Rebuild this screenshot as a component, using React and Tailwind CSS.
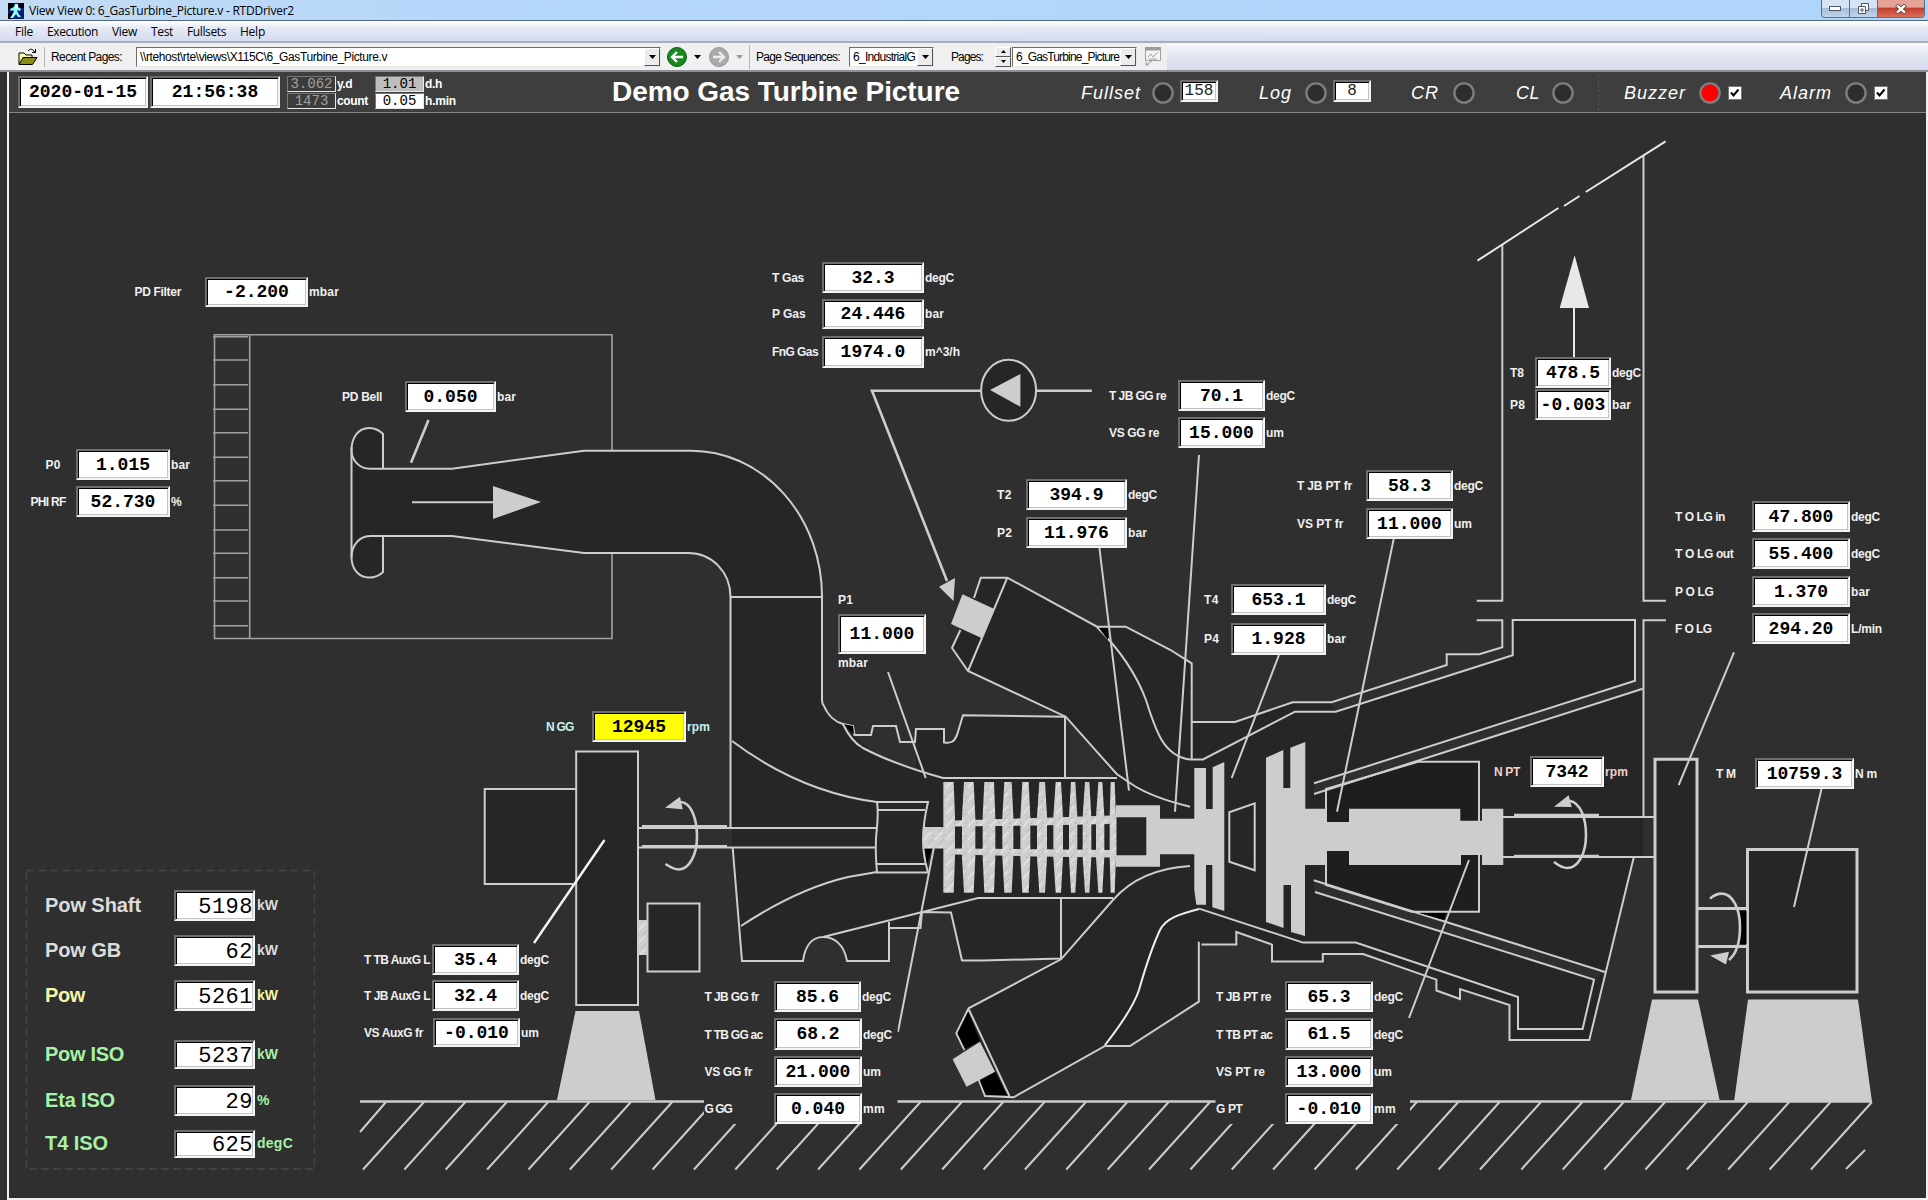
import { useLayoutEffect, useRef } from "react";

/* Text that is tracked in or out so that it fills a given width. */
function Fit({ w, className = "", children }) {
  const ref = useRef(null);
  useLayoutEffect(() => {
    const el = ref.current;
    el.style.letterSpacing = "0px";
    const natural = el.getBoundingClientRect().width;
    const n = Math.max(1, el.textContent.length);
    el.style.letterSpacing = (w - natural) / n + "px";
  }, [w, children]);
  return (
    <span ref={ref} className={"inline-block shrink-0 whitespace-pre " + className}>
      {children}
    </span>
  );
}

const BOX =
  "border-t-2 border-l-2 border-b-2 border-r-2 border-t-[#6e6e6e] border-l-[#6e6e6e] border-b-[#f4f4f4] border-r-[#f4f4f4] shadow-[inset_1px_1px_0_#000,inset_-1px_-1px_0_#c4c4c4]";

/* label x, label width, label, centre y, box x, y, w, h, value, unit, unit width */
const READINGS = [
  [134.5, 46.5, "PD Filter", 292, 205, 277, 103, 30, "-2.200", "mbar", 30],
  [342, 40, "PD Bell", 396.5, 405, 381, 91, 31, "0.050", "bar", 19],
  [45.5, 15, "P0", 464.5, 76, 449, 94, 31, "1.015", "bar", 19],
  [30.5, 35, "PHI RF", 501.5, 76, 486, 94, 31, "52.730", "%", 9],
  [772, 32, "T Gas", 278, 822, 262, 102, 31, "32.3", "degC", 29],
  [772, 33.5, "P Gas", 314, 822, 299, 102, 30, "24.446", "bar", 19],
  [772, 46, "FnG Gas", 352, 822, 336, 102, 32, "1974.0", "m^3/h", 35],
  [1109, 57, "T JB GG re", 395.5, 1178, 380, 87, 31, "70.1", "degC", 29],
  [1109, 50, "VS GG re", 433, 1178, 417, 87, 31, "15.000", "um", 18],
  [997, 15, "T2", 494.5, 1026, 479, 101, 31, "394.9", "degC", 29],
  [997, 15, "P2", 533, 1026, 517, 101, 31, "11.976", "bar", 19],
  [1204, 15, "T4", 600, 1231, 584, 95, 31, "653.1", "degC", 29],
  [1204, 15, "P4", 639, 1231, 623, 95, 32, "1.928", "bar", 19],
  [1297, 55, "T JB PT fr", 486, 1366, 470, 87, 31, "58.3", "degC", 29],
  [1297, 46.5, "VS PT fr", 524, 1366, 508, 87, 31, "11.000", "um", 18],
  [1510, 14, "T8", 373, 1535, 357, 76, 31, "478.5", "degC", 29],
  [1510, 15, "P8", 405, 1535, 389, 76, 31, "-0.003", "bar", 19],
  [1675, 50, "T O LG in", 517, 1752, 501, 98, 31, "47.800", "degC", 29],
  [1675, 58.5, "T O LG out", 554, 1752, 538, 98, 31, "55.400", "degC", 29],
  [1675, 38.5, "P O LG", 592, 1752, 576, 98, 31, "1.370", "bar", 19],
  [1675, 36.5, "F O LG", 629, 1752, 613, 98, 31, "294.20", "L/min", 31],
  [1494, 26, "N PT", 772, 1530, 756, 74, 31, "7342", "rpm", 23, "text-[#f4d0cc]"],
  [1716, 19.5, "T M", 774, 1755, 758, 99, 31, "10759.3", "N m", 22],
  [546, 27.5, "N GG", 727, 592, 711, 94, 31, "12945", "rpm", 23, "text-[#c8f0f0]", "bg-[#ffff00]"],
  [364, 66, "T TB AuxG L", 959.5, 432, 944, 87, 31, "35.4", "degC", 29],
  [364, 66, "T JB AuxG L", 995.5, 432, 980, 87, 31, "32.4", "degC", 29],
  [364, 59, "VS AuxG fr", 1032.5, 433, 1018, 87, 29, "-0.010", "um", 18],
  [704.5, 54, "T JB GG fr", 996.5, 774, 981, 87, 31, "85.6", "degC", 29],
  [704.5, 58, "T TB GG ac", 1034.5, 774, 1018, 88, 32, "68.2", "degC", 29],
  [704.5, 47.5, "VS GG fr", 1072, 774, 1056, 88, 31, "21.000", "um", 18],
  [704.5, 27.5, "G GG", 1109, 774, 1093, 88, 31, "0.040", "mm", 22],
  [1216, 55, "T JB PT re", 997, 1285, 981, 88, 31, "65.3", "degC", 29],
  [1216, 56.5, "T TB PT ac", 1034.5, 1285, 1018, 88, 32, "61.5", "degC", 29],
  [1216, 49, "VS PT re", 1072, 1285, 1056, 88, 31, "13.000", "um", 18],
  [1216, 26.5, "G PT", 1109, 1285, 1093, 88, 31, "-0.010", "mm", 22],
];

function Reading({ r }) {
  const [lx, lw, label, cy, x, y, w, h, value, unit, uw, color = "text-[#f0f0f0]", bg = "bg-white"] = r;
  return (
    <div className={"font-bold text-[12px] leading-[16px] " + color}>
      <div className="absolute" style={{ left: lx, top: cy - 8 }}>
        <Fit w={lw}>{label}</Fit>
      </div>
      <div
        className={"absolute flex items-center justify-center whitespace-nowrap text-black font-['Liberation_Mono',monospace] text-[18px] leading-none " + bg + " " + BOX}
        style={{ left: x, top: y, width: w, height: h }}
      >
        {value}
      </div>
      <div className="absolute" style={{ left: x + w + 1, top: cy - 8 }}>
        <Fit w={uw}>{unit}</Fit>
      </div>
    </div>
  );
}

const POWER = [
  ["Pow Shaft", 96, "5198", "kW", 21, "text-[#dcdcdc]", "h-[31px]", "mt-0"],
  ["Pow GB", 76, "62", "kW", 21, "text-[#dcdcdc]", "h-[31px]", "mt-[14px]"],
  ["Pow", 40, "5261", "kW", 21, "text-[#f6f6a4]", "h-[31px]", "mt-[14px]"],
  ["Pow ISO", 79, "5237", "kW", 21, "text-[#a6f2a6]", "h-[29px]", "mt-[29px]"],
  ["Eta ISO", 70, "29", "%", 10, "text-[#a6f2a6]", "h-[31px]", "mt-[16px]"],
  ["T4 ISO", 63, "625", "degC", 36, "text-[#a6f2a6]", "h-[28px]", "mt-[14px]"],
];

function PowerPanel() {
  return (
    <div className="absolute left-[26px] top-[870px] flex h-[300px] w-[290px] flex-col pt-[20px] pl-[19px]">
      {POWER.map(([label, lw, v, u, uw, c, h, mt]) => (
        <div key={label} className={"flex items-center font-bold " + c + " " + h + " " + mt}>
          <div className="w-[129px] -mt-0.5 text-[20px] leading-none">
            <Fit w={lw}>{label}</Fit>
          </div>
          <div className={"flex h-full w-[81px] items-center justify-end bg-white font-normal text-black font-['Liberation_Mono',monospace] text-[22px] leading-none " + BOX}>
            <Fit w={v.length * 13.7} className="pt-1">{v}</Fit>
          </div>
          <div className="-mt-px pl-0.5 text-[14px]">
            <Fit w={uw}>{u}</Fit>
          </div>
        </div>
      ))}
    </div>
  );
}

const TICKS = [336.7, 360, 384.7, 409.3, 432.7, 457.3, 480.7, 505.3, 530, 553.3, 577.7, 601, 625.7];

/* Compressor blades: top left, top right, middle left, middle right */
const BLADES = [
  [130, 161, 130, 165], [192, 221, 186, 226], [253, 282, 248, 286], [313, 335, 307, 340],
  [367, 386, 361, 391], [418, 435, 411, 441], [467, 483, 460, 489], [513, 526, 507, 532],
  [555, 568, 548, 574], [595, 607, 588, 613], [632, 644, 629, 648],
].map((b) => b.map((v) => 900 + v / 3));

const HATCH = Array.from({ length: 36 }, (_, k) => 424 + 41.37 * k);

function Turbine() {
  return (
    <svg className="absolute inset-0" width="1928" height="1200" viewBox="0 0 1928 1200" fill="none" stroke="#cdcdcd" strokeWidth="2">
      <defs>
        <pattern id="metal" width="11" height="13" patternUnits="userSpaceOnUse">
          <rect width="11" height="13" fill="#cfcfcf" stroke="none" />
          <path d="M0 8L7 0" stroke="#e6e6e3" strokeWidth="1.2" />
          <path d="M3 13L9 7" stroke="#b4b4b4" strokeWidth="0.8" />
          <path d="M8 5l2-2" stroke="#a4a4a4" strokeWidth="0.7" />
        </pattern>
      </defs>

      {/* power summary frame */}
      <rect x="26.500" y="870.500" width="288" height="298.500" stroke="#424242" strokeWidth="1.800" strokeDasharray="8 4" />

      {/* intake filter */}
      <g stroke="#a2a2a2" strokeWidth="1.6">
        <path d="M214.5 334.7H612V638.5H214.5ZM249.7 334V638.5" />
        {TICKS.map((y) => (
          <path key={y} d={`M213 ${y}H248`} />
        ))}
      </g>

      {/* dark bodies */}
      <g fill="#262626" stroke="none">
        <path d="M351.5 447C353 458 360 468.7 370 468.7H452L584 450.7H691A131 146 0 0 1 822 597V700C824 716 836 722 843 724L853 726L854 735C866 750 905 768 916 770V729H944V742C951 743 954 742 957 735L963 715L1066 716.7V778H1113L1128 782L1190 806.7V866L1163 870.7Q1135 880 1113 900L1061 959.3H962L951 912.6L922 912L920 928H889V961H847C844 944 834 937 823 937C812 937 805 946 803 961H742L732 848V597H730.5C730 572 712 553 688 553H584L452 536H370C360 536 353 545 351.5 557Z" />
        <path d="M383 468V434C379 430 375 428 369 428C358 428 351.5 438 351.5 450C351.5 460 359 468.7 370 468.7ZM383 536V572C379 576 375 577.5 369 577.5C358 577.5 351.5 568 351.5 557C351.5 546 359 536 370 536Z" />
        <path d="M980.8 577.7H1007.3L1097 626.7L1125.7 626L1191.7 663.3V722H1235L1292.7 702.3H1331L1335.7 711.7L1512.7 655.3V620H1635V680.7L1314 783.3V794L1643.3 688.7V857H1633.7L1589.3 1040H1509.5V1005L1460 989V999L1436.4 990.5V979.6L1363 954H1322.8V961.4H1272V944.6L1236.3 932V944.6H1198.8V1001.7L1130 1046H1105L1013.5 1097.3H985L956.3 1033.3L968.6 1008.3L1061 959.3L1113 900V774L1065 717L968 671L952 648Z" />
      </g>
      <path d="M1066.5 718V776H1114Z" fill="#2f2f2f" stroke="none" />
      <path d="M1314 783.3L1635 680.7L1643 688.7L1314 794Z M1313.7 880.2L1605 972L1594 979.6L1315 892Z" fill="#2f2f2f" stroke="none" />
      <path d="M1326 789L1418 761.7H1479V911.7H1411.6L1326 885Z" fill="#1e1e1e" />

      {/* inlet duct */}
      <path d="M351.5 447V557" />
      <path d="M383 468V434C379 430 375 428 369 428C358 428 351.5 438 351.5 450C351.5 460 359 468.7 370 468.7H452L584 450.7H691A131 146 0 0 1 822 597V700C822 702 823 705 824 706C828 716 836 722 843 724L853 726L854.5 735H871L873 726H896L900 742H915L916 729H944V742.5C951 743.5 954 742 957 735L963 715.3L1066 716.7" />
      <path d="M383 536V572C379 576 375 577.5 369 577.5C358 577.5 351.5 568 351.5 557C351.5 546 359 536 370 536H452L584 553H688C712 553 730.5 572 730.5 597V827M730.5 597H822" />
      <path d="M843 724L853 726L854 734Z" fill="#000" stroke="none" />
      <path d="M843 724C848 735 856 744 863 748Q893 764 943 778H1117M1065 716V778" />
      <path d="M732 741Q800 792 877 802M741 926Q797 889 848 877L877 872" />
      <path d="M877 802H928C925 815 923 827 923 840C923 853 925 862 928 872.5H877C875 850 876 845 876 838C877 825 879 815 877 802ZM877 810H925M877 864H926" />
      <path d="M925 849H932L927 864Z" fill="#000" stroke="none" />
      <path d="M639 828H876M639 847.5H876" />
      <path d="M642 826.5H727M642 846.5H727" strokeWidth="3" />
      <path d="M732.7 848L742 961H803C805 946 812 937 823 937C834 937 844 944 847 961H889V922M823 937L978 898H1113M889 928H920.5L922 912L951 912.6L962 960.5H983L1061 958.5V898" />

      {/* combustion chambers */}
      <path d="M974 598L980.8 577.7H1007.3L1097 626.7H1125.7L1170.6 650L1191.7 663.3V759M960.4 630L952 648L968 671L1065.7 716.7L1116.7 774L1130 783Q1150 797 1190 806.7M1007.3 577.7L968 671" />
      <path d="M1097 627C1122 652 1137 676 1146 700C1156 732 1164 756 1190 759.5H1203L1295 711.7H1335.7L1512.7 655.3V620H1635V680.7L1314 783.3" />
      <path d="M962.4 594.3L994.3 609L982 638.3L951 624Z" fill="#cdcdcd" stroke="none" />
      <path d="M1099 628H1108V640Z" fill="#000" stroke="none" />
      <path d="M1190 866Q1140 869 1113 900L1061 959.3L968.6 1008.3L956.3 1033.3L964.5 1050M978.8 1080L985 1096L1013.5 1097.3L1105 1046H1130L1198.8 1001.7V941.7M968.6 1009L1009.4 1096" />
      <path d="M968 1012L957.5 1033.3L965 1049L980 1041ZM980 1081L995 1072L1007 1095H986Z" fill="#000" stroke="none" />
      <path d="M980 1041.7L995 1071.7L966.5 1086.7L952.6 1059.3Z" fill="#cdcdcd" stroke="none" />
      <path d="M1105 1045C1123 1022 1134 1005 1139 990C1147 962 1152 947 1160 930C1166 918 1180 914 1199 909" stroke="#eeeeee" />
      <path d="M1199 908.6L1303 942.6H1355.7L1518 997V1029H1582.6L1594 979.6L1315 892" />
      <path d="M1201.5 944.6H1236.3V932L1272 944.6V961.4H1322.8V954H1363L1436.4 979.6V990.5L1460 999V989L1509.5 1005V1040H1589.3L1633.7 857.5M1313.7 880.2L1605 972" />
      <path d="M1419 913H1446L1444 920Z" fill="#000" stroke="none" />
      <path d="M1191.7 722H1235L1292.7 702.3H1331.7L1446.7 665V654.3H1479.3L1502.3 647.3V620.3H1476.7M1314 794L1642.7 688.7" />

      {/* stack */}
      <path d="M1502.3 244V600.7H1476.7M1643.5 156V600.7H1666M1666 620.3H1643.5V816" />
      <path d="M1477.4 260.7L1558.4 208M1564 206L1579.5 196M1585.8 192L1665.6 141.3" stroke="#e8e8e8" />
      <path d="M1574 305V357" stroke="#e8e8e8" />
      <path d="M1574.6 255.3L1589 308H1559.7Z" fill="#e8e8e8" stroke="none" />

      {/* compressor rotor */}
      <g fill="url(#metal)" stroke="none">
        <path d="M923 827H944V848.5H923ZM954 820.5L1036 818L1111 815.500V824L1036 825.500L954 826.5ZM954 848.5L1111 850V857.500L1036 856.500L954 854.500Z" />
        {BLADES.map(([a, b, c, d]) => (
          <path key={a} d={`M${a} 782H${b}L${d} 817V857L${b} 892.7H${a}L${c} 857V817Z`} />
        ))}
        <path d="M638.5 920H647V955H638.5Z" />
      </g>

      {/* turbine rotors */}
      <g fill="#cdcdcd" stroke="none">
        <path fillRule="evenodd" d="M1116 805.3H1160V818.7H1194.3V768H1206V809H1212.7V767.3L1224.3 762V911L1212.3 907.3V865H1206V904.7H1196.3L1194.3 890V854.3H1160V866.7H1116ZM1116.5 817.3V855.3H1146.3V817.3Z" />
        <path d="M1266 757.7L1283.3 750V788H1290.3V747.7L1305.3 742V808.7H1326.3V822H1349V808.7H1460.3V820.7H1482V808.7H1503.3V865H1482V855H1461V865H1349V851H1326.3V865H1305V936L1291 932V885H1283.5V928L1266 922Z" />
      </g>
      <path d="M1229.3 812.3L1254.7 803.3V870.3L1229.3 861.7Z" />

      {/* output shaft */}
      <path d="M1503 817H1655M1503 857H1655" />
      <path d="M1514 815.2H1599M1514 856.3H1599" strokeWidth="3" />

      {/* gear boxes, starter and brake */}
      <g fill="#262626" strokeWidth="2">
        <path d="M484.7 789H577V884H484.7Z" />
        <path d="M576.2 751.5H638V1005H576.2Z" />
        <path d="M647.5 903.5H699.5V971.5H647.5Z" />
        <path d="M1655 759.3H1697V992H1655ZM1747.500 849.5H1857V992H1747.500Z" strokeWidth="3" />
        <path d="M1698 908.6H1747M1698 946.4H1747" strokeWidth="3" />
      </g>
      <path d="M1740 911H1746.5V944H1740Z" fill="#000" stroke="none" />
      <path d="M575.5 1011H639L655.5 1100H557ZM1652 999.5H1698L1719.6 1100H1631ZM1748 999.5H1858L1872 1102H1734Z" fill="#cdcdcd" stroke="none" />

      {/* ground */}
      <path d="M360 1101.5H1872" strokeWidth="2.5" />
      <path d="M386 1102L360 1132M1865 1150L1846 1169" />
      {HATCH.map((x) => (
        <path key={x} d={`M${x} 1102L${x - 61} 1169.5`} />
      ))}

      {/* direction arrows */}
      <path d="M412 502.3H494" />
      <g strokeWidth="2.6">
        <path d="M681 802C691 803 697 818 697 837C697 855 689 869 679 869.5C674 869.5 670 867 665.5 864" />
        <path d="M1570 800.7C1580 803 1586 817 1586 835C1586 854 1578 868 1567 868C1562 868 1558 865 1554 862" />
        <path d="M1710 898.6C1714 895 1718 893.6 1722 893.6C1732 893.6 1740 908 1740 927C1740 941 1737 953 1729 960" />
      </g>
      <g fill="#cdcdcd" stroke="none">
        <path d="M493 486L541 502L493 519Z" />
        <path d="M665 807.7L680 796.7L682.7 809.3Z" />
        <path d="M1554 806.7L1568.7 795.3L1571.7 807Z" />
        <path d="M1710 955.5L1729 951.7L1726 964.5Z" />
        <path d="M939 586.7L955 578L953.5 601Z" />
      </g>

      {/* fuel gas supply */}
      <path d="M1091.8 390.7H872L947 581" strokeWidth="2.6" />
      <ellipse cx="1008.6" cy="390.3" rx="27.5" ry="30.5" fill="#262626" />
      <path d="M990 390L1020.4 374V406.7Z" fill="#cdcdcd" stroke="none" />

      {/* leader lines */}
      <path d="M428.5 420L411 462.7" strokeWidth="2.6" />
      <path d="M604.5 840L534 943" stroke="#f4f4f4" strokeWidth="2.4" />
      <path d="M888 672L925.7 778M1099.3 547L1129 790.7M1199 455L1175 811.7M1279 655L1231.7 778M1393.7 539L1337 811.7M1469 860L1409 1018M934 847L898 1031.7M1734 652.3L1678.7 785M1821.7 788L1794 907" />

      <path d="M704 1018H897.5V1124H704ZM1215.5 1018H1410V1124H1215.5Z" fill="#2f2f2f" stroke="none" />
    </svg>
  );
}

function DropButton({ className = "" }) {
  return (
    <div className={"flex w-4 shrink-0 items-center justify-center border-t border-l border-t-white border-l-white border-r border-b border-r-[#555] border-b-[#555] bg-[#ececec] " + className}>
      <svg width="7" height="4" viewBox="0 0 7 4"><path d="M0 0H7L3.5 4Z" fill="#000" /></svg>
    </div>
  );
}

function Combo({ className, children }) {
  return (
    <div className={"flex h-5 shrink-0 overflow-hidden border border-[#6c6c6c] border-r-[#e8e8e8] border-b-[#e8e8e8] bg-white " + className}>
      <div className="flex min-w-0 flex-1 items-center overflow-hidden pl-[3px]">{children}</div>
      <DropButton />
    </div>
  );
}

function TitleBar() {
  return (
    <div className="flex h-[21px] items-start border-b border-[#54687e] bg-gradient-to-r from-[#c4dbf3] via-[#b4d6fb] via-25% to-[#b0d5fa] pl-2 text-[12px] text-black font-['Open_Sans',sans-serif]">
      <svg className="mt-[3px]" width="16" height="16" viewBox="0 0 16 16">
        <rect width="16" height="16" fill="#0a1e78" />
        <path d="M0 0H6V4L3 7H0ZM10 0H16V5H12ZM0 11L4 9V16H0Z" fill="#000" />
        <path d="M7 1H10V4L13 6L12 8L9 7L10 10L13 14H10L8 11L5 15H2L6 9L5 7L3 8L2 6L6 4Z" fill="#8ff" />
        <path d="M8 2H9V5H8ZM7 9L5 13" stroke="#fff" fill="#fff" />
      </svg>
      <Fit w={265} className="ml-[5px] mt-0.5 leading-[17px]">View View 0: 6_GasTurbine_Picture.v - RTDDriver2</Fit>
      <div className="ml-auto mr-[3px] flex h-[18px] overflow-hidden rounded-b border border-t-0 border-[#5a6f88]">
        <div className="flex w-7 items-center justify-center border-r border-[#5a6f88] bg-gradient-to-b from-[#d5e4f4] from-45% via-[#a5bdd7] via-50% to-[#c0d5eb]">
          <svg width="13" height="6"><rect x="0.5" y="0.5" width="11" height="4" fill="#fff" stroke="#4a5566" /></svg>
        </div>
        <div className="flex w-7 items-center justify-center border-r border-[#5a6f88] bg-gradient-to-b from-[#d5e4f4] from-45% via-[#a5bdd7] via-50% to-[#c0d5eb]">
          <svg width="13" height="12" fill="#fff" stroke="#4a5566"><path d="M4.500 .5H11.500V7.500H4.500Z" /><path d="M1.500 3.500H8.500V10.500H1.500ZM4 6H6V8H4Z" /></svg>
        </div>
        <div className="flex w-[46px] items-center justify-center bg-gradient-to-b from-[#e3a396] from-40% via-[#c3402c] via-50% to-[#d8705c]">
          <svg width="12" height="10" viewBox="0 0 12 10"><path d="M1.500 1L10.500 9M10.500 1L1.500 9" stroke="#5b3a3a" strokeWidth="4" /><path d="M2 1.300L10 8.700M10 1.300L2 8.700" stroke="#fff" strokeWidth="2.400" /></svg>
        </div>
      </div>
    </div>
  );
}

const MENU = [["File", 18, "ml-0"], ["Execution", 51, "ml-[14px]"], ["View", 25, "ml-[14px]"], ["Test", 22, "ml-[14px]"], ["Fullsets", 39, "ml-[14px]"], ["Help", 25, "ml-[14px]"]];

function MenuBar() {
  return (
    <div className="flex h-[22px] items-start border-b-2 border-[#a9aebb] bg-gradient-to-b from-white via-[#e6eaf5] via-35% to-[#d5dbee] pl-[15px] pt-0.5 text-[12px] leading-[18px] text-black font-['Open_Sans',sans-serif]">
      {MENU.map(([t, w, m]) => <Fit key={t} w={w} className={m}>{t}</Fit>)}
    </div>
  );
}

function Round({ green }) {
  return (
    <svg width="20" height="20" viewBox="0 0 20 20" className="shrink-0">
      <circle cx="10" cy="10" r="9.500" fill={green ? "#168a1c" : "#a9a9a9"} stroke={green ? "#0b5c10" : "#989898"} />
      <path d={green ? "M16 10H5M10 5L5 10L10 15" : "M4 10H15M10 5L15 10L10 15"} stroke={green ? "#fff" : "#ededed"} strokeWidth="2.400" fill="none" />
    </svg>
  );
}

function Toolbar() {
  return (
    <div className="flex h-[29px] border-b-2 border-[#8d9096] bg-gradient-to-b from-[#fafbfe] via-[#e4e8f3] via-40% to-[#d6dcee]">
      <div className="flex w-[1167px] items-center bg-[#f0f0f0] pl-[18px] text-[12px] text-black">
        <svg width="20" height="18" viewBox="0 0 20 18" className="shrink-0">
          <path d="M1 16V5H6L8 7H14V10" fill="#ffffa0" stroke="#000" />
          <path d="M1 16.500L5 9.500H19L14.500 16.500Z" fill="#8b8b1a" stroke="#000" />
          <path d="M10 3C12 .5 15 .5 16.500 4M17.500 1V4.500H14" fill="none" stroke="#000" />
        </svg>
        <div className="ml-1.5 h-5 border-l border-[#b5b5b5]" />
        <Fit w={71} className="ml-1.5">Recent Pages:</Fit>
        <Combo className="ml-[14px] w-[525px]"><Fit w={247}>{"\\\\rtehost\\rte\\views\\X115C\\6_GasTurbine_Picture.v"}</Fit></Combo>
        <div className="ml-1.5 flex items-center">
          <Round green />
          <svg className="ml-[7px]" width="7" height="4"><path d="M0 0H7L3.500 4Z" fill="#000" /></svg>
        </div>
        <div className="ml-2 flex items-center">
          <Round />
          <svg className="ml-[7px]" width="7" height="4"><path d="M0 0H7L3.500 4Z" fill="#9a9a9a" /></svg>
        </div>
        <div className="ml-1.5 h-6 border-l border-[#b5b5b5]" />
        <Fit w={84} className="ml-1.5">Page Sequences:</Fit>
        <Combo className="ml-[9px] w-[85px]"><Fit w={62}>6_IndustrialG</Fit></Combo>
        <Fit w={32} className="ml-[17px]">Pages:</Fit>
        <div className="ml-3 flex h-5 w-4 flex-col">
          {[0, 1].map((i) => (
            <div key={i} className="flex flex-1 items-center justify-center border border-t-white border-l-white border-r-[#555] border-b-[#555] bg-[#ececec]">
              <svg width="5" height="3"><path d={i ? "M0 0H5L2.500 3Z" : "M0 3H5L2.500 0Z"} fill="#000" /></svg>
            </div>
          ))}
        </div>
        <Combo className="ml-px w-[125px]"><Fit w={103}>6_GasTurbine_Picture</Fit></Combo>
        <svg className="ml-[7px]" width="18" height="19" fill="none" stroke="#9c9c9c">
          <path d="M1.500 .5H16.500V13.500H1.500Z" fill="#f4f4f4" /><path d="M1 2H17" strokeWidth="3" /><path d="M4 10L7 7L9 10L14 5M5 12H13M8 14L2 18M2 15V18H5" />
        </svg>
      </div>
    </div>
  );
}

function Lamp({ className = "", fill = "#2d2d2d" }) {
  return (
    <svg width="22" height="22" viewBox="0 0 22 22" className={"shrink-0 " + className}>
      <circle cx="11" cy="11" r="9.600" fill={fill} stroke="#7e7e7e" strokeWidth="2.400" />
    </svg>
  );
}

function Check() {
  return (
    <svg width="14" height="14" viewBox="0 0 14 14" className="ml-[7px] shrink-0">
      <rect x="0.500" y="0.500" width="13" height="13" fill="#fff" stroke="#777" />
      <path d="M3 6.500L5.500 9.500L10.500 3.500" fill="none" stroke="#000" strokeWidth="2" />
    </svg>
  );
}

function Mini({ children, className }) {
  return (
    <div className={"flex h-4 w-[49px] items-center justify-center border border-t-[#777] border-l-[#777] border-r-[#e8e8e8] border-b-[#e8e8e8] font-['Liberation_Mono',monospace] text-[14px] leading-none " + className}>
      {children}
    </div>
  );
}

function StatusBar() {
  const clock = "flex h-[32px] w-[130px] items-center justify-center bg-white font-bold text-black font-['Liberation_Mono',monospace] text-[18px] " + BOX;
  const count = "flex h-[22px] w-[38px] shrink-0 items-center justify-center bg-white not-italic text-[#222] font-['Liberation_Mono',monospace] text-[16px] leading-none " + BOX;
  return (
    <div className="flex h-[41px] items-center border-b border-[#858585] bg-[#3e3e3e] pl-[9px] text-white">
      <div className={clock}>2020-01-15</div>
      <div className={"ml-0.5 " + clock}>21:56:38</div>
      <div className="ml-[7px] flex flex-col gap-px">
        <Mini className="bg-[#3c3c3c] text-[#a0a0a0]">3.062</Mini>
        <Mini className="bg-[#3c3c3c] text-[#a0a0a0]">1473</Mini>
      </div>
      <div className="ml-px flex w-[38px] flex-col items-start gap-px text-[12px] font-bold leading-4">
        <Fit w={15}>y.d</Fit>
        <Fit w={31}>count</Fit>
      </div>
      <div className="flex flex-col gap-px text-black">
        <Mini className="bg-[#bebebe]">1.01</Mini>
        <Mini className="bg-white">0.05</Mini>
      </div>
      <div className="ml-px flex w-[187px] flex-col items-start gap-px text-[12px] font-bold leading-4">
        <Fit w={17}>d.h</Fit>
        <Fit w={31}>h.min</Fit>
      </div>
      <Fit w={348} className="text-[28px] font-bold leading-none">Demo Gas Turbine Picture</Fit>
      <div className="ml-[121px] flex items-center pt-0.5 text-[18px] italic">
        <Fit w={60}>Fullset</Fit>
        <Lamp className="ml-[11px]" />
        <div className={"-mt-1 ml-[6px] " + count}>158</div>
        <Fit w={33} className="ml-[41px]">Log</Fit>
        <Lamp className="ml-[13px]" />
        <div className={"-mt-1 ml-[6px] " + count}>8</div>
        <Fit w={28} className="ml-10">CR</Fit>
        <Lamp className="ml-[14px]" />
        <Fit w={24} className="ml-[41px]">CL</Fit>
        <Lamp className="ml-3" />
        <div className="ml-6 h-9 border-l border-dashed border-[#555]" />
        <Fit w={62} className="ml-[25px]">Buzzer</Fit>
        <Lamp className="ml-[13px]" fill="#ff0000" />
        <Check />
        <Fit w={52} className="ml-[38px]">Alarm</Fit>
        <Lamp className="ml-[13px]" />
        <Check />
      </div>
    </div>
  );
}

export default function App() {
  return (
    <div className="relative h-[1200px] w-[1928px] overflow-hidden bg-[#2f2f2f] font-['Liberation_Sans',sans-serif]">
      <Turbine />
      <div className="relative flex h-[1200px] flex-col">
        <TitleBar />
        <MenuBar />
        <Toolbar />
        <div className="ml-[7px] flex flex-1 flex-col border-b-2 border-l-2 border-r-2 border-[#f0f0f0]">
          <StatusBar />
        </div>
      </div>
      {READINGS.map((r, i) => <Reading key={i} r={r} />)}
      <div className="absolute left-[838px] top-[592px] flex w-[88px] flex-col text-[12px] font-bold leading-4 text-[#f0f0f0]">
        <div className="h-[22px]"><Fit w={15}>P1</Fit></div>
        <div className={"flex h-10 items-center justify-center bg-white text-[18px] text-black font-['Liberation_Mono',monospace] " + BOX}>11.000</div>
        <div className="mt-px"><Fit w={30}>mbar</Fit></div>
      </div>
      <PowerPanel />
    </div>
  );
}
